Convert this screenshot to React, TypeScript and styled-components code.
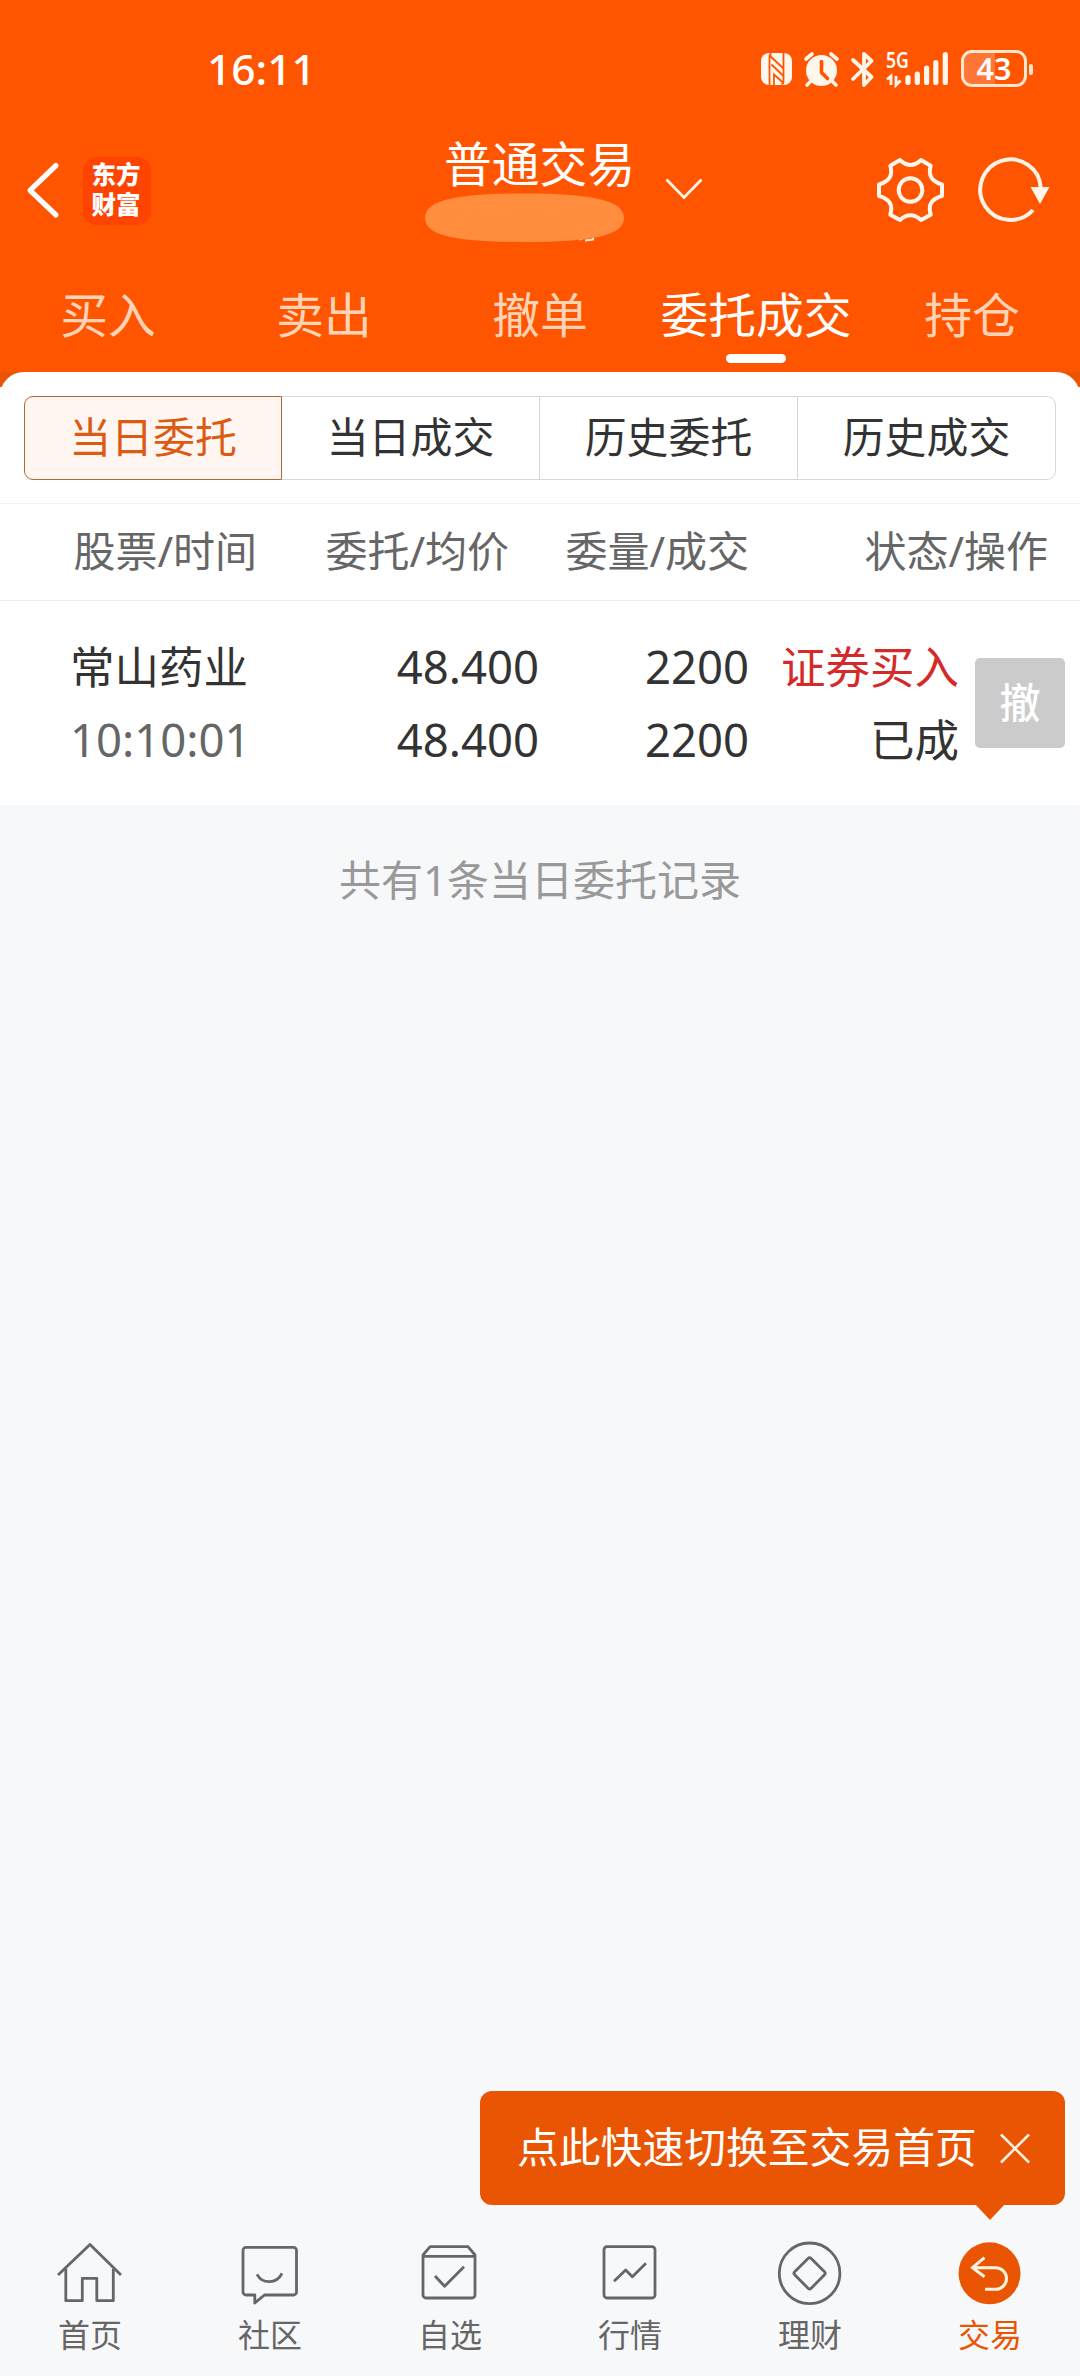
import React from "react";
import styled, { createGlobalStyle, css } from "styled-components";

const ORANGE = "#ff5500";
const DEEP = "#ea5504";
const FONT = `"Noto Sans", "Noto Sans CJK SC", sans-serif`;

const GlobalStyle = createGlobalStyle`
  * { box-sizing: border-box; }
  body { margin: 0; background: #f7f8fa; }
  button { font: inherit; color: inherit; background: none; border: 0; padding: 0; }
`;

const Screen = styled.div`
  width: 1080px;
  height: 2376px;
  display: flex;
  flex-direction: column;
  background: #f7f8fa;
  color: #333;
  font-family: ${FONT};
  overflow: hidden;
`;

const Header = styled.header`
  height: 372px;
  flex: none;
  display: flex;
  flex-direction: column;
  background: ${ORANGE};
  color: #fff;
`;

const StatusBar = styled.div`
  height: 137px;
  flex: none;
  display: flex;
  justify-content: space-between;
  padding: 0 47px 0 207px;
`;

const Clock = styled.span`
  margin-top: 41px;
  height: 56px;
  font: 500 42.5px/56px ${FONT};
`;

const StatusIcons = styled.div`
  display: flex;
  margin-top: 48px;
  height: 42px;
`;

const Signal = styled.div`
  position: relative;
  width: 64px;
  height: 42px;
  margin: 0 11px 0 11px;
`;

const NetLabel = styled.span`
  position: absolute;
  left: 0;
  top: 1px;
  font: 600 22px/20px ${FONT};
  transform: scaleX(0.8);
  transform-origin: left;
`;

const Battery = styled.div`
  display: flex;
  align-items: center;
  height: 42px;
`;

const BatteryShell = styled.div`
  margin-top: -1px;
  width: 66px;
  height: 37px;
  border: 3px solid #ffe6cf;
  border-radius: 11px;
  background: linear-gradient(90deg, #ff7637 31px, transparent 31px);
  font: 600 30.5px/31px ${FONT};
  text-align: center;
`;

const BatteryTip = styled.i`
  width: 4px;
  height: 11px;
  margin-left: 2px;
  border-radius: 2px;
  background: #ffe6cf;
`;

const TitleBar = styled.div`
  height: 115px;
  flex: none;
  display: grid;
  grid-template-columns: 425px 1fr 210px;
`;

const Left = styled.div`
  display: flex;
  align-items: flex-start;
  padding: 20px 0 0 20px;
`;

const Logo = styled.div`
  width: 68px;
  height: 68px;
  margin-left: 15px;
  padding: 4px 2px 0 0;
  display: flex;
  flex-direction: column;
  align-items: center;
  border-radius: 14px;
  background: #ff4300;
  font: 900 24.5px/30px "Liberation Sans", "Noto Sans CJK SC", sans-serif;
`;

const Account = styled.div`
  display: flex;
  align-items: flex-start;
`;

const AccountName = styled.div`
  width: 228px;
  display: flex;
  flex-direction: column;
`;

const Title = styled.h1`
  margin: 0 0 0 19px;
  height: 56px;
  font-size: 47.8px;
  line-height: 54px;
  font-weight: 400;
  white-space: nowrap;
`;

const Actions = styled.div`
  display: flex;
  padding-top: 13px;
`;

const Tabs = styled.nav`
  flex: 1;
  display: grid;
  grid-template-columns: repeat(5, 216px);
`;

const Tab = styled.button<{ $active?: boolean }>`
  display: flex;
  flex-direction: column;
  align-items: center;
  padding-top: 28px;
  font-size: 47.8px;
  line-height: 70px;
  white-space: nowrap;
  color: ${(p) => (p.$active ? "#fff" : "#ffd3b5")};
  ${(p) =>
    p.$active &&
    css`
      &::after {
        content: "";
        width: 60px;
        height: 9px;
        margin-top: 4px;
        border-radius: 5px;
        background: #fff;
      }
    `}
`;

const SheetBack = styled.div`
  flex: none;
  background: linear-gradient(${DEEP} 15px, #fff 15px);
`;

const Sheet = styled.section`
  height: 433px;
  border-radius: 24px 24px 0 0;
  background: #fff;
`;

const Segments = styled.div`
  height: 132px;
  padding: 24px 24px 0;
  display: grid;
  grid-template-columns: repeat(4, 258px);
  border-bottom: 1px solid #f1f1f1;
`;

const Segment = styled.button<{ $active?: boolean }>`
  height: 84px;
  border: 1px solid ${(p) => (p.$active ? "#b0683c" : "#d6d7d7")};
  ${(p) => !p.$active && "border-left-width: 0;"}
  background: ${(p) => (p.$active ? "#fff6f2" : "#fff")};
  color: ${(p) => (p.$active ? "#dd5a12" : "#333")};
  font-size: 41.9px;
  line-height: 78px;
  padding-bottom: 2px;
  &:first-child { border-radius: 9px 0 0 9px; }
  &:last-child { border-radius: 0 9px 9px 0; }
`;

const TableHead = styled.div`
  height: 97px;
  display: grid;
  grid-template-columns: 257px 252px 240px 299px;
  border-bottom: 1px solid #ececec;
  color: #666;
  font-size: 42px;
  line-height: 94px;
  text-align: right;
  white-space: nowrap;
`;

const OrderRow = styled.div`
  display: grid;
  grid-template-columns: 280px 259px 210px 210px 1fr;
  padding-top: 29px;
  font-size: 44.5px;
  line-height: 73px;
`;

const Cell = styled.div<{ $left?: boolean }>`
  display: flex;
  flex-direction: column;
  text-align: ${(p) => (p.$left ? "left" : "right")};
  padding-left: ${(p) => (p.$left ? 70 : 0)}px;
  white-space: nowrap;
`;

const Value = styled.span<{ $tone?: "buy" | "muted"; $digits?: boolean }>`
  color: ${(p) => (p.$tone === "buy" ? "#d42a2a" : p.$tone === "muted" ? "#666" : "#333")};
  font-size: ${(p) => (p.$digits ? "45.500px" : "inherit")};
`;

const CancelButton = styled.button`
  width: 90px;
  height: 90px;
  margin: 28px 0 0 16px;
  padding-bottom: 2px;
  border-radius: 5px;
  background: #cbcbcb;
  color: #fff;
  font-size: 41px;
  font-weight: 500;
  line-height: 86px;
`;

const Summary = styled.p`
  margin: 0;
  padding-top: 44px;
  text-align: center;
  color: #999;
  font-size: 42px;
  line-height: 62px;
`;

const Footer = styled.footer`
  margin-top: auto;
  display: flex;
  flex-direction: column;
`;

const Tip = styled.div`
  position: relative;
  align-self: flex-end;
  width: 585px;
  height: 114px;
  margin: 0 15px 33px 0;
  padding-left: 37px;
  display: flex;
  align-items: center;
  border-radius: 12px;
  background: ${DEEP};
  color: #fff;
  font-size: 41.8px;
  line-height: 60px;
  white-space: nowrap;
  &::after {
    content: "";
    position: absolute;
    left: 495px;
    top: 113px;
    border: 15px solid transparent;
    border-top: 16px solid ${DEEP};
    border-bottom: 0;
  }
  svg { margin-left: 20px; }
`;

const TipText = styled.span`
  padding-bottom: 2px;
`;

const NavBar = styled.nav`
  height: 138px;
  display: grid;
  grid-template-columns: repeat(6, 180px);
`;

const NavItem = styled.button<{ $active?: boolean }>`
  display: flex;
  flex-direction: column;
  align-items: center;
  color: ${(p) => (p.$active ? DEEP : "#666")};
  font-size: 32px;
  line-height: 48px;
  svg { margin-bottom: 1px; }
`;

const NavSvg = ({ children }: { children: React.ReactNode }) => (
  <svg width="72" height="72" viewBox="0 0 72 72" fill="none" stroke="currentColor" strokeWidth="2.8" strokeLinejoin="round">
    {children}
  </svg>
);

const nav = [
  {
    label: "首页",
    icon: (
      <>
        <path d="M4 37 36 6.5 67 37" />
        <path d="M11.8 31v31.7h16.5V40.3h14.5v22.4h16.5V31" />
      </>
    ),
  },
  {
    label: "社区",
    icon: (
      <>
        <path d="M12 9.3h47.5a3 3 0 0 1 3 3V54a3 3 0 0 1-3 3h-29l-9.700 8V57H12a3 3 0 0 1-3-3V12.300a3 3 0 0 1 3-3Z" />
        <path d="M23 36.300c5.500 10 19.500 10 25-1" />
      </>
    ),
  },
  {
    label: "自选",
    icon: (
      <>
        <path d="M9 17 16.100 8.700H54L61 17V57a3 3 0 0 1-3 3H12a3 3 0 0 1-3-3ZM9 18.300H61" />
        <path d="m21 38 9.600 10.300L50 28.700" />
      </>
    ),
  },
  {
    label: "行情",
    icon: (
      <>
        <rect x="10" y="8.700" width="51" height="51.300" rx="3" />
        <path d="M20 43.300 31.700 32l6.600 6.700L52 25.300" />
      </>
    ),
  },
  {
    label: "理财",
    icon: (
      <>
        <circle cx="35.600" cy="35.300" r="30.300" />
        <path d="M34 20.600q1.600-1.600 3.200 0L50.500 33.800q1.500 1.500 0 3L37.200 50.200q-1.600 1.600-3.200 0L20.700 36.800q-1.500-1.500 0-3Z" />
      </>
    ),
  },
  {
    label: "交易",
    active: true,
    icon: (
      <>
        <circle cx="35.500" cy="35.300" r="31" fill="currentColor" stroke="none" />
        <path d="M30.500 19.700 18.500 29.700l12 9M18.500 29.700H41.700a10.800 10.800 0 0 1 0 21.600H31" stroke="#fff3e0" strokeWidth="3" strokeLinejoin="miter" />
      </>
    ),
  },
];

const tabs = ["买入", "卖出", "撤单", "委托成交", "持仓"];
const segments = ["当日委托", "当日成交", "历史委托", "历史成交"];
const heads = ["股票/时间", "委托/均价", "委量/成交", "状态/操作"];

/* NFC, alarm and bluetooth glyphs share one strip */
const StatusGlyphs = () => (
  <svg width="115" height="42" viewBox="0 0 115 42" fill="none" stroke="#fff6ec">
    <rect x="1" y="5" width="31" height="32" rx="8" fill="#fff6ec" stroke="none" />
    <g stroke={ORANGE} strokeWidth="1.800">
      <path d="M9.500 37V8.500Q9.500 6 11.500 6M23.500 5v28.500Q23.500 36 21.500 36" />
      <path d="M9.500 7.500 23.500 20.500M11.500 16.500 23.500 28M14 37V26.500L23.500 35" />
    </g>
    <circle cx="61.500" cy="22.500" r="15.500" fill="#fff6ec" stroke="none" />
    <path d="m46 11 6-5M77 11l-6-5M50 34l-3 3M73 34l3 3" strokeWidth="3.600" strokeLinecap="round" />
    <path d="M61.500 13.500v11l6 6" stroke={ORANGE} strokeWidth="3.600" strokeLinecap="round" />
    <path d="M93 12 111.500 29l-7.500 8V6l7.500 7L93 31" strokeWidth="3.800" strokeLinecap="round" strokeLinejoin="round" />
  </svg>
);

export default function App() {
  return (
    <Screen>
      <GlobalStyle />
      <Header>
        <StatusBar>
          <Clock>16:11</Clock>
          <StatusIcons>
            <StatusGlyphs />
            <Signal>
              <NetLabel>5G</NetLabel>
              <svg width="64" height="42" viewBox="0 0 64 42" fill="none" stroke="#fff6ec">
                <path d="M22 29.500V34.500M31.300 26V34.500M40.600 20V34.500M49.800 14.500V34.500M59.300 6.500V34.500" strokeWidth="5.200" strokeLinecap="round" />
                <path d="M1 31.500 5 28V37M10 28V37L14.500 32.500" strokeWidth="2.800" />
              </svg>
            </Signal>
            <Battery>
              <BatteryShell>43</BatteryShell>
              <BatteryTip />
            </Battery>
          </StatusIcons>
        </StatusBar>

        <TitleBar>
          <Left>
            <svg width="48" height="68" viewBox="0 0 48 68" fill="none" stroke="#fff" strokeWidth="5.200" strokeLinecap="round" strokeLinejoin="round">
              <path d="M36 8.500 10 33.300 36 58" />
            </svg>
            <Logo>
              <span>东方</span>
              <span>财富</span>
            </Logo>
          </Left>
          <Account>
            <AccountName>
              <Title>普通交易</Title>
              <svg width="200" height="50" viewBox="0 0 200 50">
                <path d="M154 46.500l4-1.500M160 47.500l8-1v-4" fill="none" stroke="#ffe3c8" strokeWidth="2.200" />
                <path d="M0 25C0 8 28 .500 99 .500S199 8 199 25 170 49 99 49 0 42 0 25Z" fill="#ff8d3d" />
              </svg>
            </AccountName>
            <svg width="60" height="70" viewBox="0 0 60 70" fill="none" stroke="#fff3e0" strokeWidth="2.800">
              <path d="M13.500 42.500 31 60.500 48.500 42.500" />
            </svg>
          </Account>
          <Actions>
            <svg width="100" height="80" viewBox="0 0 100 80" fill="none" stroke="#fff6ec" strokeWidth="4" strokeLinejoin="round">
              <path d="M51 10Q40.500 20 30 10L20.300 15.700C23 25 20 31 9 34.500V46C20 49 23 55 20.300 64.800L30 70Q40.500 60.500 51 70L60.700 64.800C58 55 61 49 72 46V34.500C61 31 58 25 60.700 15.700Z" />
              <circle cx="40.500" cy="40" r="11.800" />
            </svg>
            <svg width="90" height="80" viewBox="0 0 90 80" fill="none" stroke="#fff3e6" strokeWidth="4">
              <path d="M70.800 38A30.300 30.300 0 1 0 63 60" />
              <path d="M60.500 37H79.500L70 54Z" fill="#fff6ec" stroke="none" />
            </svg>
          </Actions>
        </TitleBar>

        <Tabs>
          {tabs.map((t) => (
            <Tab key={t} $active={t === "委托成交"}>{t}</Tab>
          ))}
        </Tabs>
      </Header>

      <SheetBack>
        <Sheet>
          <Segments>
            {segments.map((s, i) => (
              <Segment key={s} $active={i === 0}>{s}</Segment>
            ))}
          </Segments>
          <TableHead>
            {heads.map((h) => (
              <span key={h}>{h}</span>
            ))}
          </TableHead>
          <OrderRow>
            <Cell $left>
              <Value>常山药业</Value>
              <Value $tone="muted" $digits>10:10:01</Value>
            </Cell>
            <Cell>
              <Value $digits>48.400</Value>
              <Value $digits>48.400</Value>
            </Cell>
            <Cell>
              <Value $digits>2200</Value>
              <Value $digits>2200</Value>
            </Cell>
            <Cell>
              <Value $tone="buy">证券买入</Value>
              <Value>已成</Value>
            </Cell>
            <CancelButton>撤</CancelButton>
          </OrderRow>
        </Sheet>
      </SheetBack>

      <Summary>共有1条当日委托记录</Summary>

      <Footer>
        <Tip>
          <TipText>点此快速切换至交易首页</TipText>
          <svg width="36" height="36" viewBox="0 0 36 36" stroke="#fff3e0" strokeWidth="2.600">
            <path d="M4 4.500 32 32.500M32 4.500 4 32.500" />
          </svg>
        </Tip>
        <NavBar>
          {nav.map((n) => (
            <NavItem key={n.label} $active={n.active}>
              <NavSvg>{n.icon}</NavSvg>
              {n.label}
            </NavItem>
          ))}
        </NavBar>
      </Footer>
    </Screen>
  );
}
